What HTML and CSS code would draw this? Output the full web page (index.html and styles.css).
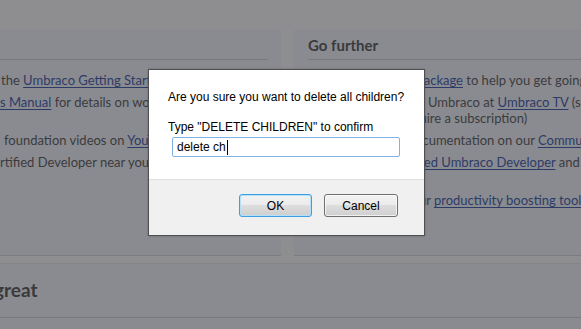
FILE: index.html
```html
<!DOCTYPE html>
<html>
<head>
<meta charset="utf-8">
<link rel="stylesheet" href="styles.css">
</head>
<body>
<div class="dash">
  <section class="panel panel-left">
    <div class="panel-head"></div>
    <ul class="items">
      <li class="ind1">the <a href="#">Umbraco Getting Started</a> guide</li>
      <li class="two"><a href="#">s Manual</a> for details on working with content</li>
      <li class="ind4">foundation videos on <a href="#">YouTube</a></li>
      <li>rtified Developer near you</li>
    </ul>
  </section>
  <section class="panel panel-right">
    <div class="panel-head"><h2>Go further</h2></div>
    <ul class="items">
      <li>Install a Starter Kit <a href="#">package</a> to help you get going</li>
      <li>Find out more about Umbraco at <a href="#">Umbraco TV</a> (some<br>of all the videos require a subscription)</li>
      <li>Find plenty more documentation on our <a href="#">Community</a> website</li>
      <li>Find a nearby Certifi<a href="#">ed Umbraco Developer</a> and<br>get help</li>
      <li>Go and check out our <a href="#">productivity boosting tools</a></li>
    </ul>
  </section>
  <section class="panel panel-wide">
    <div class="panel-head wide-head"><h2>great</h2></div>
  </section>
</div>

<div class="dialog">
  <div class="dialog-body">
    <p class="msg">Are you sure you want to delete all children?</p>
    <p class="msg msg2">Type "DELETE CHILDREN" to confirm</p>
    <div class="field">delete ch<span class="caret"></span></div>
  </div>
  <div class="dialog-foot">
    <button class="btn btn-ok">OK</button>
    <button class="btn btn-cancel">Cancel</button>
  </div>
</div>
</body>
</html>
```
FILE: styles.css
```css
html, body {
  margin: 0;
  padding: 0;
}
body {
  width: 581px;
  height: 329px;
  overflow: hidden;
  background: #8e8e90;
  font-family: Lato, "Open Sans", sans-serif;
  color: #3b3b3e;
  position: relative;
}
.dash {
  padding-top: 30px;
  display: grid;
  grid-template-columns: 281px 287px;
  column-gap: 13px;
  row-gap: 7px;
}
.panel {
  background: #8a8b90;
  height: 225px;
  border-bottom: 1px solid #7c7c80;
  overflow: hidden;
}
.panel-head {
  height: 30px;
  border-bottom: 1px solid #77787c;
  box-sizing: border-box;
}
.panel-left .panel-head {
  margin-right: 13px;
}
.panel-right .panel-head {
  margin-left: 14px;
}
.panel-head h2 {
  margin: 0;
  font-size: 15px;
  line-height: 31px;
  font-weight: 700;
  color: #3a3a3c;
}
.items {
  list-style: none;
  margin: 0;
  padding: 12px 0 0 0;
  font-size: 13px;
  line-height: 16px;
  white-space: nowrap;
}
.items li {
  margin-bottom: 6px;
}
.panel-right .items {
  padding-left: 14px;
}
.items a {
  color: #2d3b67;
  text-decoration: underline;
  text-underline-offset: 2px;
}
.ind1 { padding-left: 1px; }
.ind4 { padding-left: 4px; }
.two { min-height: 32px; }

.panel-wide {
  grid-column: 1 / 3;
  height: 66px;
  border-bottom: none;
  border-top: 1px solid #84858a;
}
.wide-head {
  height: 54px;
}
.wide-head h2 {
  font-size: 19px;
  line-height: 52px;
  margin-left: -6px;
}

/* dialog */
.dialog {
  position: absolute;
  left: 148px;
  top: 69px;
  width: 277px;
  height: 167px;
  box-sizing: border-box;
  border: 1px solid #505052;
  background: #fff;
  box-shadow: 0 0 2px rgba(0,0,0,0.25);
  font-family: "Liberation Sans", Arial, sans-serif;
  color: #000;
  display: flex;
  flex-direction: column;
}
.dialog-body {
  padding: 20px 0 0 19px;
  height: 109px;
  box-sizing: border-box;
}
.msg {
  margin: 0;
  font-size: 12px;
  line-height: 14px;
}
.msg2 {
  margin-top: 16px;
}
.field {
  margin: 3px 0 0 4px;
  width: 228px;
  height: 20px;
  box-sizing: border-box;
  border: 1px solid #7fb3e6;
  border-radius: 2px;
  padding-left: 4px;
  font-size: 12px;
  line-height: 18px;
  display: flex;
  align-items: center;
}
.caret {
  display: inline-block;
  width: 1px;
  height: 15px;
  background: #000;
  margin-left: 1px;
}
.dialog-foot {
  flex: 1;
  background: #f0f0f0;
  border-top: 1px solid #dfdfdf;
  display: flex;
  justify-content: flex-end;
  align-items: flex-start;
  padding: 14px 26px 0 0;
  gap: 12px;
}
.btn {
  height: 23px;
  box-sizing: border-box;
  border: 1px solid #707070;
  border-radius: 3px;
  background: linear-gradient(#f2f2f2 0%, #ebebeb 50%, #dddddd 50%, #cfcfcf 100%);
  font-family: "Liberation Sans", Arial, sans-serif;
  font-size: 12px;
  color: #000;
  padding: 0;
  box-shadow: inset 0 0 0 1px rgba(255,255,255,0.7);
}
.btn-ok {
  width: 73px;
  border-color: #3c9ee5;
  box-shadow: inset 0 0 0 1px #b4e0f8;
}
.btn-cancel {
  width: 74px;
}
```
